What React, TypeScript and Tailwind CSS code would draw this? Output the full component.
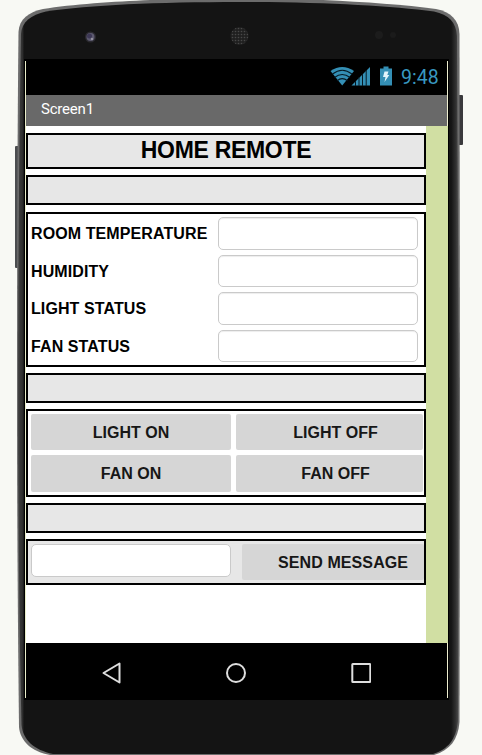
import type { ReactNode } from "react";

function PhoneBody() {
  return (
    <svg className="absolute inset-0" width="482" height="755" viewBox="0 0 482 755">
      <defs>
        <linearGradient id="body" gradientUnits="userSpaceOnUse" x1="17" x2="460" y1="0" y2="0">
          <stop offset="0" stopColor="#5a5a5a" />
          <stop offset="0.004" stopColor="#3c3c3c" />
          <stop offset="0.012" stopColor="#303030" />
          <stop offset="0.016" stopColor="#141414" />
          <stop offset="0.980" stopColor="#141414" />
          <stop offset="0.990" stopColor="#303030" />
          <stop offset="1" stopColor="#5a5a5a" />
        </linearGradient>
        <pattern id="mesh" width="3" height="3" patternUnits="userSpaceOnUse">
          <rect width="3" height="3" fill="#202020" />
          <circle cx="1.500" cy="1.500" r="0.800" fill="#484848" />
        </pattern>
      </defs>
      <rect x="15" y="146" width="5" height="122" rx="1" fill="#4b4d4f" />
      <rect x="457" y="95" width="6" height="50" rx="1" fill="#3a3a3c" />
      <path
        d="M17 400 C17 250 17.500 120 18.500 32 C19 19 29 12 43 9 C80 3 140 0 180 -1 L300 -1 C350 1 400 4 436 9 C451 12 459 20 459.500 34 L460 400 L459.500 722 C458 740 450 750 434 755 L50 755 C32 752 20 741 19 727 C18 640 17 520 17 400 Z"
        fill="#6c6c6c"
      />
      <path
        d="M18 400 C18 250 19.500 120 21 34 C21.500 22 31 15 46 11.500 C90 5 155 2 240 2 C325 2 390 6 434 11.500 C449 15 456 22 457 36 L459 400 L458 721 C456 740 448 749 433 754 L53 754 C34 750 23 740 21.500 725 C19.500 640 18 520 18 400 Z"
        fill="url(#body)"
      />
      <circle cx="90.500" cy="37" r="5.500" fill="#2b2a30" />
      <circle cx="90.500" cy="37" r="4" fill="#5d5a70" />
      <circle cx="89.500" cy="36" r="2.500" fill="#3d3856" />
      <circle cx="92" cy="39" r="1.200" fill="#9694a0" />
      <circle cx="239.500" cy="36" r="9" fill="url(#mesh)" />
      <circle cx="379" cy="35" r="4" fill="#1c1c1c" />
      <circle cx="393" cy="35" r="3" fill="#1b1b1b" />
    </svg>
  );
}

function StatusIcons() {
  return (
    <svg width="62" height="22" viewBox="331 66 62 22" className="mr-[9px]">
      <path d="M331.500 71 Q343.200 63 355 71 L343.200 85.500 Z" fill="#348fb5" />
      <g fill="none" stroke="#061a24" strokeWidth="1.100">
        <path d="M333.500 74 Q343.200 66.500 353 74" />
        <path d="M335.500 77.500 Q343.200 71.500 351 77.500" />
        <path d="M338 80.800 Q343.200 76.500 348.500 80.800" />
      </g>
      <path d="M352.500 85.500 L371 67 V85.500 Z" fill="#348fb5" />
      <path d="M356.500 81v5M360 77v9M363.500 74v12M367.200 70v16" stroke="#061a24" strokeWidth="1" />
      <path d="M381 68.500h3.500v-2h5v2h3.500v17h-12z" fill="#348fb5" />
      <path d="M385.500 71.500h4l-1.200 3.500h2l-4.800 7 1-5h-2.500z" fill="#e2f4fb" />
    </svg>
  );
}

function Panel({ className, children }: { className: string; children?: ReactNode }) {
  return <div className={`w-full shrink-0 border-2 border-black ${className}`}>{children}</div>;
}

function Field({ label }: { label: string }) {
  return (
    <label className="flex h-[37.500px] items-start pl-[3px]">
      <span className="mt-[7px] w-[187px] whitespace-nowrap text-[16px] leading-[20px] tracking-[0.1px]">
        {label}
      </span>
      <span className="h-[32.500px] w-[200px] rounded-[5px] border border-[#cacaca] bg-white shadow-[inset_0_1px_1px_#ededed]" />
    </label>
  );
}

function Button({ label }: { label: string }) {
  return (
    <button className="rounded-[2px] bg-[#d6d6d6] pt-px text-center text-[16px] font-bold leading-[20px] text-[#171717] even:pl-[12px]">
      {label}
    </button>
  );
}

const readings = ["ROOM TEMPERATURE", "HUMIDITY", "LIGHT STATUS", "FAN STATUS"];
const commands = ["LIGHT ON", "LIGHT OFF", "FAN ON", "FAN OFF"];

export default function App() {
  return (
    <div className="relative h-[755px] w-[482px] overflow-hidden bg-[#f8f9f4] pl-[24px] pt-[59px] font-['Liberation_Sans',Arial,sans-serif]">
      <PhoneBody />
      <div className="relative flex h-[641px] w-[425px] bg-black px-px">
        <div className="mt-[2px] h-[637px] w-px bg-[#e9edc9]" />
        <div className="flex w-[421px] flex-col">
          <div className="flex h-[36px] items-center justify-end pr-[8px]">
            <StatusIcons />
            <span className="w-[38px] whitespace-nowrap pt-px font-['Roboto',sans-serif] text-[19.500px] leading-[22px] text-[#3898c0]">
              9:48
            </span>
          </div>
          <div className="flex h-[31px] items-center bg-[#696969] pb-[2px] pl-[15px] font-['Roboto',sans-serif] text-[15px] tracking-[-0.2px] text-white">
            Screen1
          </div>
          <div className="flex h-[517px] bg-[#d1dfa3]">
            <main className="flex w-[400px] flex-col bg-white pt-[7px] font-bold text-black">
              <Panel className="h-[36px] bg-[#e7e7e7]">
                <h1 className="text-center text-[23px] leading-[30px] tracking-[-0.3px]">HOME REMOTE</h1>
              </Panel>
              <Panel className="mt-[6px] h-[30px] bg-[#e7e7e7]" />
              <Panel className="mt-[7px] h-[155px] pt-[3px]">
                {readings.map((label) => (
                  <Field key={label} label={label} />
                ))}
              </Panel>
              <Panel className="mt-[6px] h-[30px] bg-[#e7e7e7]" />
              <Panel className="mt-[6px] grid h-[88px] grid-cols-[200px_187px] grid-rows-[36px_37px] gap-[5px] pl-[3px] pt-[3px]">
                {commands.map((label) => (
                  <Button key={label} label={label} />
                ))}
              </Panel>
              <Panel className="mt-[6px] h-[30px] bg-[#e7e7e7]" />
              <Panel className="mt-[6px] flex h-[46px] bg-[#e7e7e7] pl-[3px] pt-[3px]">
                <span className="h-[33px] w-[200px] rounded-[5px] border border-[#cacaca] bg-white" />
                <button className="ml-[11px] h-[36px] w-[182px] whitespace-nowrap rounded-[2px] bg-[#d6d6d6] pl-[36px] pt-px text-left text-[16px] leading-[20px] tracking-[0.1px] text-[#171717]">
                  SEND MESSAGE
                </button>
              </Panel>
            </main>
          </div>
          <nav className="flex h-[57px] items-start pl-[75px] pt-[19px]">
            <svg width="270" height="22" viewBox="101 662 270 22" fill="none" stroke="#dedede" strokeWidth="2">
              <path d="M119.500 663.500 V682.500 L103.500 673 Z" strokeLinejoin="round" />
              <circle cx="236" cy="673" r="9" />
              <rect x="352.300" y="664" width="18" height="18" rx="0.500" />
            </svg>
          </nav>
        </div>
        <div className="mt-[2px] h-[637px] w-px bg-[#eeeed0] pt-[65px]">
          <div className="h-[517px] bg-[#d1dfa3]" />
        </div>
      </div>
    </div>
  );
}
